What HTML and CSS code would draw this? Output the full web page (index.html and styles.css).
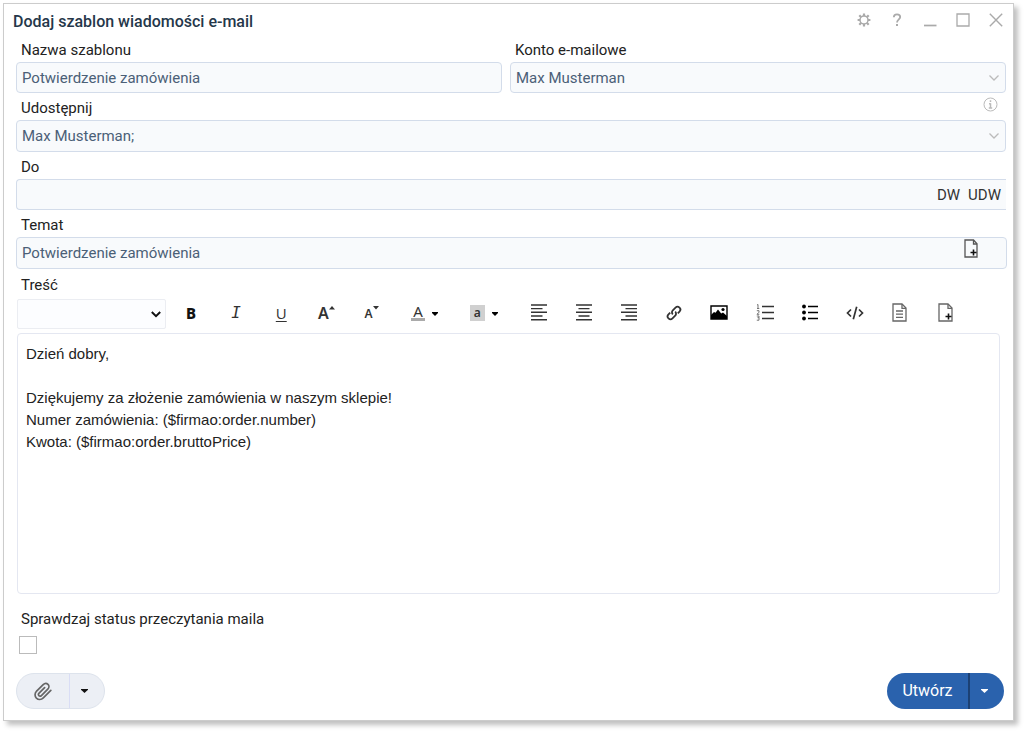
FILE: index.html
```html
<!DOCTYPE html>
<html lang="pl">
<head>
<meta charset="utf-8">
<meta name="viewport" content="width=device-width, initial-scale=1">
<title>Dodaj szablon wiadomości e-mail</title>
<link rel="stylesheet" href="styles.css">
</head>
<body>
<form class="dialog">
  <header class="dialog-header">
    <h1 class="dialog-title">Dodaj szablon wiadomości e-mail</h1>
    <div class="window-actions">
      <button type="button" class="icon-button" aria-label="Ustawienia"><svg width="14" height="14" viewBox="0 0 14 14" fill="none" stroke="currentColor"><circle cx="7" cy="7" r="4" stroke-width="1.5"/><path stroke-width="2.2" d="M7 .6v2.4M7 11v2.400M.6 7h2.400M11 7h2.400M2.300 2.300l1.900 1.900M9.800 9.800l1.900 1.900M11.700 2.300L9.800 4.200M4.200 9.800l-1.900 1.900"/></svg></button>
      <button type="button" class="icon-button" aria-label="Pomoc"><svg width="14" height="14" viewBox="0 0 14 14" fill="none" stroke="currentColor"><path stroke-width="1.800" d="M3.800 4.300C3.800 2.200 5.100 1.300 7 1.300s3.200 1 3.200 2.800C10.200 6.200 7 6.600 7 9.500"/><path stroke-width="2" d="M7 11v2"/></svg></button>
      <button type="button" class="icon-button" aria-label="Minimalizuj"><svg width="14" height="14" viewBox="0 0 14 14" fill="none" stroke="currentColor"><path stroke-width="1.700" d="M1 12.500h12.500"/></svg></button>
      <button type="button" class="icon-button" aria-label="Maksymalizuj"><svg width="14" height="14" viewBox="0 0 14 14" fill="none" stroke="currentColor"><path stroke-width="1.300" d="M1 1h12v12H1z"/></svg></button>
      <button type="button" class="icon-button" aria-label="Zamknij"><svg width="14" height="14" viewBox="0 0 14 14" fill="none" stroke="currentColor"><path stroke-width="1.400" d="M.8 .8l12.400 12.400M13.200 .8L.8 13.200"/></svg></button>
    </div>
  </header>

  <div class="fields">
    <div class="field-row">
      <div class="field">
        <label class="label" for="name">Nazwa szablonu</label>
        <input class="control" id="name" type="text" value="Potwierdzenie zamówienia">
      </div>
      <div class="field">
        <label class="label" for="account">Konto e-mailowe</label>
        <select class="control control-select" id="account"><option>Max Musterman</option></select>
      </div>
    </div>
    <div class="field">
      <div class="label-line">
        <label class="label" for="share">Udostępnij</label>
        <button type="button" class="info-button" aria-label="Informacja"><svg width="15" height="15" viewBox="0 0 15 15" fill="none" stroke="currentColor"><circle cx="7.500" cy="7.500" r="6.500"/><path stroke-width="1.500" d="M7.500 3.300v1.600M7.500 6.200v4.800M6 6.700h1.500M5.800 11h3.400"/></svg></button>
      </div>
      <select class="control control-select control-tall" id="share"><option>Max Musterman;</option></select>
    </div>
    <div class="field">
      <label class="label" for="to">Do</label>
      <div class="control control-open">
        <input class="bare-input" id="to" type="text">
        <button type="button" class="text-button">DW</button>
        <button type="button" class="text-button">UDW</button>
      </div>
    </div>
    <div class="field field-subject">
      <label class="label" for="subject">Temat</label>
      <div class="control control-subject control-tall">
        <input class="bare-input" id="subject" type="text" value="Potwierdzenie zamówienia">
        <button type="button" class="insert-button" aria-label="Wstaw pole"><svg width="14" height="19" viewBox="0 0 14 19" fill="none" stroke="currentColor" stroke-width="1.300"><path d="M1 1h8.500l3.500 3.800V18H1z"/><path d="M9.500 1v4H13"/><path stroke="#111" stroke-width="1.600" d="M9.500 10.500v6M6.500 13.500h6"/></svg></button>
      </div>
    </div>
  </div>

  <section class="editor">
    <label class="label" for="font">Treść</label>
    <div class="toolbar">
      <select class="font-select" id="font" aria-label="Czcionka"><option></option></select>
      <div class="tools">
        <button type="button" class="tool glyph glyph-bold" aria-label="Pogrubienie">B</button>
        <button type="button" class="tool glyph glyph-italic" aria-label="Kursywa">I</button>
        <button type="button" class="tool glyph glyph-underline" aria-label="Podkreślenie">U</button>
        <button type="button" class="tool glyph" aria-label="Powiększ tekst"><span class="size-up">A</span><svg class="size-mark" width="6" height="4" viewBox="0 0 6 4"><path fill="currentColor" d="M0 3.500h6L3 0z"/></svg></button>
        <button type="button" class="tool glyph" aria-label="Pomniejsz tekst"><span class="size-down">A</span><svg class="size-mark" width="6" height="4" viewBox="0 0 6 4"><path fill="currentColor" d="M0 0h6L3 3.500z"/></svg></button>
        <button type="button" class="tool tool-wide glyph" aria-label="Kolor tekstu"><span class="text-color">A</span><svg class="caret" width="6" height="4" viewBox="0 0 6 4"><path fill="currentColor" d="M0 0h6v1L3 4 0 1z"/></svg></button>
        <button type="button" class="tool tool-wide tool-back glyph" aria-label="Kolor tła"><span class="back-color">a</span><svg class="caret" width="6" height="4" viewBox="0 0 6 4"><path fill="currentColor" d="M0 0h6v1L3 4 0 1z"/></svg></button>
        <button type="button" class="tool" aria-label="Do lewej"><svg width="18" height="17" viewBox="0 0 18 17" stroke="currentColor" stroke-width="1.400"><path d="M1 1h16M1 4.600h11.500M1 8.300h16M1 12h11.500M1 15.700h16"/></svg></button>
        <button type="button" class="tool" aria-label="Do środka"><svg width="18" height="17" viewBox="0 0 18 17" stroke="currentColor" stroke-width="1.400"><path d="M1 1h16M3.500 4.600h11M1 8.300h16M3.500 12h11M1 15.700h16"/></svg></button>
        <button type="button" class="tool" aria-label="Do prawej"><svg width="18" height="17" viewBox="0 0 18 17" stroke="currentColor" stroke-width="1.400"><path d="M1 1h16M5.500 4.600H17M1 8.300h16M5.500 12H17M1 15.700h16"/></svg></button>
        <button type="button" class="tool" aria-label="Odnośnik"><svg width="16" height="16" viewBox="0 0 16 16" fill="none" stroke="currentColor" stroke-width="1.800"><path d="M6.800 9.300a2.800 2.800 0 0 1 0-4l2.700-2.700a2.800 2.800 0 0 1 4 4l-1.700 1.700"/><path d="M9.200 6.700a2.800 2.800 0 0 1 0 4l-2.700 2.700a2.800 2.800 0 0 1-4-4l1.700-1.700"/></svg></button>
        <button type="button" class="tool tool-dark" aria-label="Obraz"><svg width="18" height="15" viewBox="0 0 18 15"><path fill="none" stroke="currentColor" stroke-width="1.400" d="M1 1h16v13H1z"/><circle cx="13" cy="4.500" r="1.600" fill="currentColor"/><path fill="currentColor" d="M1 14V10l3-3 1.500.7L8 4.500l3.200 4 1.800-1L17 11v3z"/></svg></button>
        <button type="button" class="tool" aria-label="Lista numerowana"><svg width="18" height="17" viewBox="0 0 18 17" fill="none" stroke="currentColor"><path stroke-width="1.500" d="M6 2.500h12M6 8.500h12M6 14.500h12"/><path stroke="#666" stroke-width=".9" d="M1 1l1-.5V4.500M1 4.500h2.300M.8 6.700h2.200v1.500L1 10.300h2.300M.8 12h2.200v1.700H1.500M3 13.700v2.500H.8"/></svg></button>
        <button type="button" class="tool tool-dark" aria-label="Lista punktowana"><svg width="16" height="17" viewBox="0 0 16 17" stroke="currentColor"><path stroke-width="1.500" d="M6 2.500h10M6 8.500h10M6 14.500h10"/><g fill="currentColor" stroke="none"><circle cx="2" cy="2.500" r="1.900"/><circle cx="2" cy="8.500" r="1.900"/><circle cx="2" cy="14.500" r="1.900"/></g></svg></button>
        <button type="button" class="tool" aria-label="Kod źródłowy"><svg width="18" height="14" viewBox="0 0 18 14" fill="none" stroke="currentColor" stroke-width="1.700"><path d="M5 3.500L1.500 7 5 10.500M13 3.500L16.500 7 13 10.500M10.700 .8L7.300 13.200"/></svg></button>
        <button type="button" class="tool tool-gray" aria-label="Szablon"><svg width="15" height="19" viewBox="0 0 15 19" fill="none" stroke="currentColor" stroke-width="1.300"><path d="M1 1h9l4 4v13H1z"/><path d="M10 1v4.300h4M4 8h7M4 11.200h7M4 14.400h7"/></svg></button>
        <button type="button" class="tool tool-gray" aria-label="Wstaw pole"><svg width="15" height="19" viewBox="0 0 15 19" fill="none" stroke="currentColor" stroke-width="1.300"><path d="M1 1h9l4 4v13H1z"/><path d="M10 1v4.300h4"/><path stroke="#111" stroke-width="1.600" d="M10.500 10.500v6M7.500 13.500h6"/></svg></button>
      </div>
    </div>
    <div class="message" contenteditable="true" role="textbox" aria-multiline="true" aria-label="Treść">
      <p>Dzień dobry,</p>
      <p><br></p>
      <p>Dziękujemy za złożenie zamówienia w naszym sklepie!</p>
      <p>Numer zamówienia: ($firmao:order.number)</p>
      <p>Kwota: ($firmao:order.bruttoPrice)</p>
    </div>
  </section>

  <div class="status">
    <label class="label" for="status">Sprawdzaj status przeczytania maila</label>
    <input class="checkbox" id="status" type="checkbox">
  </div>

  <footer class="dialog-footer">
    <div class="split split-light">
      <button type="button" class="split-main" aria-label="Załącz plik"><svg width="20" height="20" viewBox="0 0 20 20" fill="none" stroke="currentColor" stroke-width="1.700" stroke-linecap="round"><path d="M17.800 9.400l-7.500 7.400c-2 2-5 2.100-6.900.3-1.900-1.900-1.800-4.900.2-6.900l6.600-6.600c1.400-1.400 3.500-1.500 4.800-.2 1.300 1.300 1.200 3.400-.2 4.800l-6.400 6.400c-.8.800-1.900.8-2.500.1-.7-.7-.6-1.700.2-2.500l5.500-5.500"/></svg></button>
      <button type="button" class="split-more" aria-label="Więcej opcji załącznika"><svg width="7" height="4" viewBox="0 0 7 4"><path fill="currentColor" d="M0 0h7v.7L3.500 4 0 .7z"/></svg></button>
    </div>
    <div class="split split-primary">
      <button type="submit" class="split-main">Utwórz</button>
      <button type="button" class="split-more" aria-label="Więcej opcji"><svg width="7" height="4" viewBox="0 0 7 4"><path fill="currentColor" d="M0 0h7v.7L3.500 4 0 .7z"/></svg></button>
    </div>
  </footer>
</form>
</body>
</html>
```
FILE: styles.css
```css
* {
  box-sizing: border-box;
}

body {
  margin: 0;
  padding: 3px 10px 10px 3px;
  min-height: 100vh;
  display: flex;
  background: #fff;
  color: #222;
  font: 15px/24px Roboto, sans-serif;
}

button,
input,
select {
  font: inherit;
  color: inherit;
}

button {
  border: 0;
  padding: 0;
  background: none;
  cursor: pointer;
}

svg {
  display: block;
  flex: none;
}

.dialog {
  flex: 1;
  min-width: 0;
  display: flex;
  flex-direction: column;
  border: 1px solid #ccc;
  background: #fff;
  box-shadow: 4px 4px 5px rgba(0, 0, 0, 0.25);
}

.dialog-header {
  display: flex;
  justify-content: space-between;
  height: 31px;
  padding: 4px 7px 0 9px;
}

.dialog-title {
  margin: 0;
  padding-top: 2px;
  font-size: 16px;
  font-weight: 500;
  color: #25374a;
}

.window-actions {
  display: flex;
  gap: 13px;
  color: #aaa;
}

.icon-button {
  display: flex;
  justify-content: center;
  align-items: center;
  width: 20px;
  height: 24px;
}

.fields {
  padding: 0 6px 0 12px;
}

.field-row {
  display: grid;
  grid-template-columns: 486px 1fr;
  gap: 8px;
}

.field {
  display: flex;
  flex-direction: column;
  padding-right: 1px;
}

.field-row .field:first-child,
.field-subject {
  padding-right: 0;
}

.label {
  display: block;
  padding: 3px 5px 0;
}

.label-line {
  display: flex;
  justify-content: space-between;
}

.info-button {
  padding: 0 8px 5px;
  color: #bbb;
}

.control {
  width: 100%;
  height: 31px;
  padding: 0 5px;
  border: 1px solid #d3dcea;
  border-radius: 4px;
  background-color: #f8fafc;
  color: #4b6077;
}

.control-tall {
  height: 32px;
}

.control-select {
  appearance: none;
  background-image: url("data:image/svg+xml,%3Csvg xmlns='http://www.w3.org/2000/svg' width='10' height='6' fill='none' stroke='%23bbb' stroke-width='1.300'%3E%3Cpath d='M.5 .5L5 5 9.500 .5'/%3E%3C/svg%3E");
  background-repeat: no-repeat;
  background-position: right 6px center;
}

.control-open,
.control-subject {
  display: flex;
  align-items: center;
}

.control-open {
  gap: 8px;
  border-right: 0;
  border-radius: 4px 0 0 4px;
}

.bare-input {
  flex: 1;
  min-width: 0;
  padding: 0;
  border: 0;
  outline: 0;
  background: none;
}

.text-button {
  color: #333;
}

.insert-button {
  align-self: flex-start;
  padding: 1px 23px 0 0;
  color: #555;
}

.editor {
  flex: 1;
  display: flex;
  flex-direction: column;
  padding: 1px 13px 0 13px;
}

.editor > .label {
  padding: 3px 4px 0;
}

.toolbar {
  display: flex;
  gap: 3px;
  margin: 2px 33px 4px 0;
}

.font-select {
  width: 149px;
  height: 30px;
  flex: none;
  border: 1px solid #ebedf2;
  border-radius: 2px;
  appearance: none;
  background: #fcfdff url("data:image/svg+xml,%3Csvg xmlns='http://www.w3.org/2000/svg' width='10' height='7' fill='none' stroke='%23111' stroke-width='2'%3E%3Cpath d='M.8 1L5 5.200 9.200 1'/%3E%3C/svg%3E") no-repeat right 4px center;
}

.tools {
  flex: 1;
  display: flex;
  justify-content: space-between;
  color: #333;
}

.tool {
  display: flex;
  justify-content: center;
  align-items: center;
  width: 44px;
  height: 27px;
}

.tool-wide {
  width: 60px;
  gap: 7px;
}

.tool-back {
  padding-right: 4px;
}

.tool-gray {
  color: #666;
}

.tool-dark {
  color: #000;
}

.glyph {
  font-family: "Noto Sans", sans-serif;
  font-size: 15px;
}

.glyph-bold {
  color: #111;
  font-weight: 800;
}

.glyph-italic {
  font-family: "DejaVu Sans Mono", monospace;
  font-size: 16px;
  font-style: italic;
}

.glyph-underline {
  font-family: "Open Sans", sans-serif;
  text-decoration: underline;
  text-underline-offset: 2px;
}

.size-up {
  font-size: 16px;
  font-weight: 600;
}

.size-down {
  padding-top: 3px;
  font-size: 12px;
  font-weight: 600;
}

.size-mark {
  align-self: flex-start;
  margin-top: 7px;
}

.text-color {
  width: 14px;
  border-bottom: 3px solid #aaa;
  line-height: 14px;
}

.back-color {
  width: 15px;
  background: #d0d0d0;
  font-size: 12px;
  font-weight: 600;
  line-height: 16px;
}

.caret {
  margin-top: 3px;
  color: #000;
}

.message {
  flex: 1;
  min-height: 200px;
  padding: 9px 8px;
  border: 1px solid #e4e7f1;
  border-radius: 4px;
  font: 15px/22px "Liberation Sans", Arial, sans-serif;
}

.message p {
  margin: 0;
}

.status {
  padding: 10px 12px 0;
}

.checkbox {
  display: block;
  appearance: none;
  width: 18px;
  height: 18px;
  margin: 5px 3px 0;
  border: 1px solid #bbb;
  background: #fff;
}

.dialog-footer {
  display: flex;
  justify-content: space-between;
  padding: 19px 9px 11px 12px;
}

.split {
  display: flex;
  height: 36px;
  overflow: hidden;
  border-radius: 18px;
}

.split-main,
.split-more {
  display: flex;
  justify-content: center;
  align-items: center;
}

.split-light {
  border: 1px solid #dde3ec;
  background: #eceff5;
}

.split-light .split-main {
  width: 52px;
  color: #666;
}

.split-light .split-more {
  width: 35px;
  border-left: 1px solid #d9ddf5;
  color: #111;
  padding-right: 5px;
}

.split-primary {
  background: #2a62ad;
  color: #fff;
  font-size: 16px;
}

.split-primary .split-main {
  width: 81px;
}

.split-primary .split-more {
  width: 36px;
  border-left: 2px solid #1c4174;
  padding-right: 5px;
}
```
